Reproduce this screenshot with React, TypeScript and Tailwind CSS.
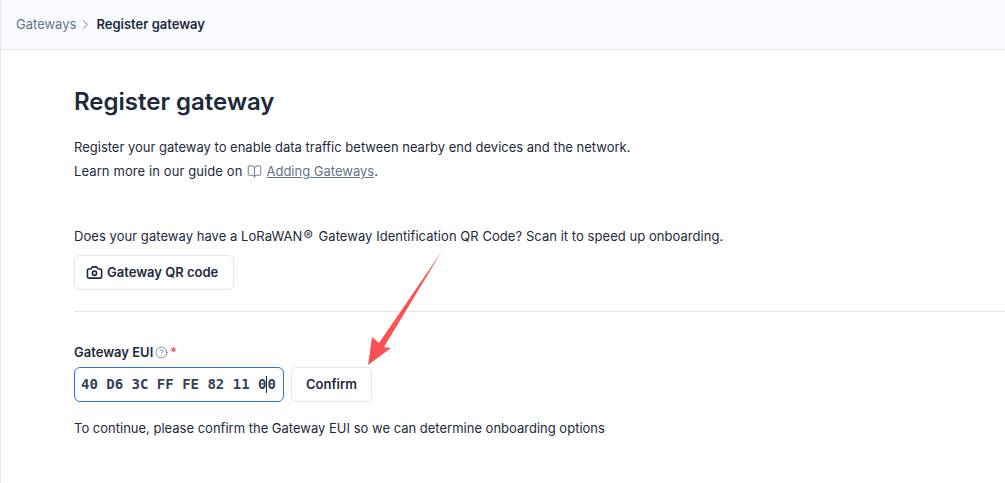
import { Camera, ChevronRight, BookOpen, CircleHelp } from 'lucide-react'

export default function App() {
  return (
    <div className="relative h-[483px] w-[1005px] overflow-hidden border-l border-[#e2e8f0] bg-white font-['Inter',sans-serif] text-[13px] text-[#1e293b]">
      <div className="flex h-[50px] items-center border-b border-[#e2e8f0] bg-[#f9fbfe] pl-[15px]">
        <span className="text-[#64748b]">Gateways</span>
        <ChevronRight className="ml-[2px] mr-[3px] size-[15px] text-[#64748b]" strokeWidth={1.5} />
        <span className="font-semibold">Register gateway</span>
      </div>
      <div className="pl-[73px] pt-[36px]">
        <h1 className="text-2xl font-semibold leading-8">Register gateway</h1>
        <p className="mt-[17px] leading-[24px]">Register your gateway to enable data traffic between nearby end devices and the network.</p>
        <p className="flex items-center leading-[24px]">
          <span className="tracking-[0.1px]">Learn more in our guide on</span>
          <BookOpen className="ml-[5px] mr-[4px] size-[15px] text-[#64748b]" strokeWidth={1.5} />
          <span className="text-[#64748b] underline">Adding Gateways</span>.
        </p>
        <p className="mt-[41px] leading-[24px] tracking-[0.05px]">
          Does your gateway have a LoRaWAN<span className="ml-[1px] mr-[2px] text-[14px]">®</span> Gateway Identification QR Code? Scan it to speed up onboarding.
        </p>
        <button className="mt-[7px] flex h-[35px] w-[160px] items-center gap-[4px] rounded-md border border-[#e2e8f0] pl-[11px] font-semibold">
          <Camera className="size-[17px]" strokeWidth={2.25} />
          Gateway QR code
        </button>
        <div className="mt-[21px] border-t border-[#e2e8f0]" />
        <div className="mt-[30px] flex items-center font-semibold leading-[20px]">
          Gateway EUI
          <CircleHelp className="ml-[2px] size-[13px] text-[#64748b]" strokeWidth={1.5} />
          <span className="ml-[2px] font-normal text-[#ef4444]">*</span>
        </div>
        <div className="mt-[5px] flex gap-[7px]">
          <div className="flex h-[35px] w-[210px] items-center rounded-md border border-[#2f6fed] pl-[6px] font-['DejaVu_Sans_Mono',monospace] text-[14px] font-bold whitespace-pre text-[#334155]">
            40 D6 3C FF FE 82 11 0<span className="h-[17px] w-0 border-l border-[#1e293b]" />0
          </div>
          <button className="h-[35px] w-[81px] rounded-md border border-[#e2e8f0] font-semibold">Confirm</button>
        </div>
        <p className="mt-[14px] leading-[24px]">To continue, please confirm the Gateway EUI so we can determine onboarding options</p>
      </div>
      <svg className="absolute left-0 top-0" width="1005" height="483" viewBox="0 0 1005 483">
        <polygon points="441,251 383,347 390,348 367,365 371,337 378,343" fill="#fa5252" />
      </svg>
    </div>
  )
}
